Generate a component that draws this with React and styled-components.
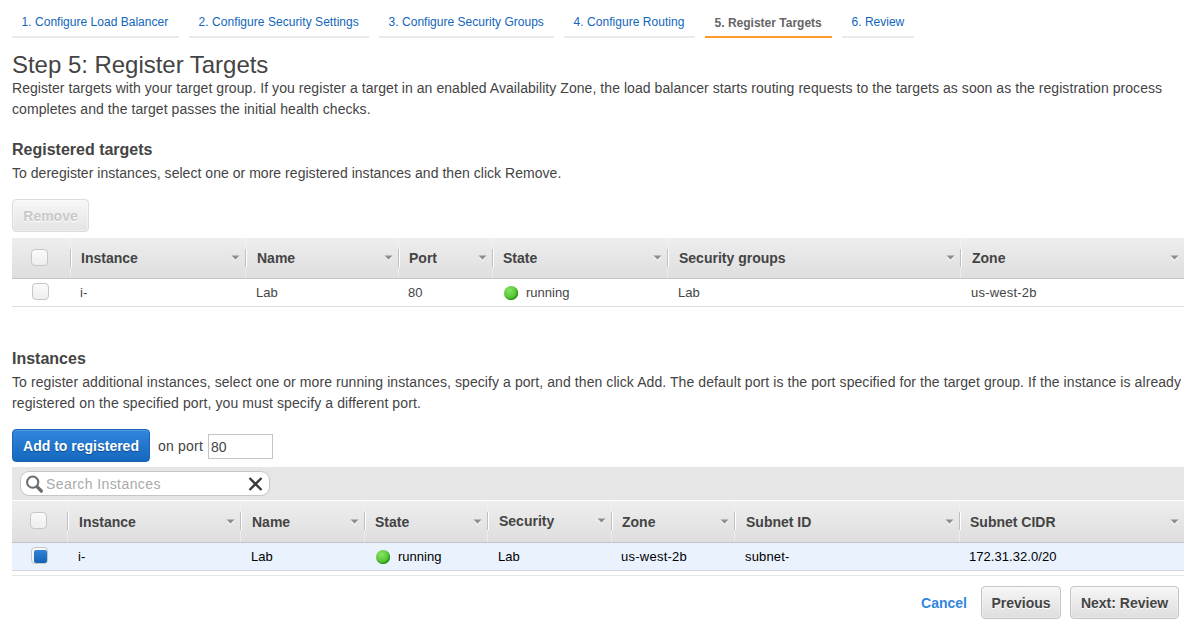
import React from "react";
import styled, { createGlobalStyle, css } from "styled-components";

const GlobalStyle = createGlobalStyle`
  * { box-sizing: border-box; }
  body {
    margin: 0;
    background: #fff;
    color: #444;
    font-family: "Liberation Sans", Arial, sans-serif;
    font-size: 14px;
  }
`;

const Page = styled.main`
  width: 1198px;
  height: 627px;
  overflow: hidden;
  padding: 6px 14px 0 12px;
`;

const Steps = styled.nav`
  display: flex;
  gap: 10px;
  height: 32px;
`;

const Step = styled.a`
  width: ${(p) => p.$width}px;
  height: 32px;
  padding: ${(p) => (p.$active ? 1 : 0)}px 0 0 9.6px;
  border-bottom: 2px solid ${(p) => (p.$active ? "#ff9a2e" : "#eaeaea")};
  color: ${(p) => (p.$active ? "#666" : "#1166bb")};
  font-size: 12px;
  font-weight: ${(p) => (p.$active ? 700 : 400)};
  line-height: 32px;
  white-space: nowrap;
  letter-spacing: ${(p) => p.$spacing || 0}px;
`;

const Title = styled.h1`
  margin: 12px 0 0;
  height: 28px;
  font-size: 24px;
  font-weight: 400;
  line-height: 30px;
  letter-spacing: -0.03px;
`;

const Copy = styled.p`
  margin: 0;
  line-height: 21px;
  white-space: nowrap;
`;

const Line = styled.span`
  display: block;
  letter-spacing: ${(p) => p.$spacing || 0}px;
`;

const Heading = styled.h2`
  margin: ${(p) => p.$top}px 0 3px;
  font-size: 16px;
  line-height: 21px;
`;

const Button = styled.button`
  display: block;
  width: ${(p) => p.$width}px;
  height: 33px;
  padding: 2px 0 0;
  border: 1px solid #c3c3c3;
  border-radius: 4px;
  background: linear-gradient(#f6f6f6, #dedede);
  box-shadow: inset 0 0 0 1px rgba(255, 255, 255, 0.35);
  color: #444;
  font: 700 14px/29px "Liberation Sans", Arial, sans-serif;
  text-shadow: 0 1px 0 #fff;
  white-space: nowrap;
  ${(p) =>
    p.$variant === "disabled" &&
    css`
      border-color: #dcdcdc;
      background: linear-gradient(#f7f7f7, #e4e4e4);
      color: #c9c9c9;
    `}
  ${(p) =>
    p.$variant === "primary" &&
    css`
      border-color: #1a64b0;
      background: linear-gradient(#3186dd, #1468bd);
      box-shadow: inset 0 1px 0 rgba(255, 255, 255, 0.15);
      color: #fff;
      text-shadow: 0 1px 1px #0b4a8c;
    `}
`;

const Table = styled.div`
  width: 1172px;
  margin-top: ${(p) => p.$top || 0}px;
`;

const Header = styled.div`
  display: grid;
  grid-template-columns: ${(p) => p.$columns};
  height: ${(p) => p.$height}px;
  border-bottom: 1px solid #c4c4c4;
  background: linear-gradient(#eeeeee, #dedede);
`;

const HeaderCell = styled.div`
  display: flex;
  align-items: center;
  justify-content: space-between;
  padding: 0 5px ${(p) => (p.$raised ? 2 : 0)}px ${(p) => p.$pad}px;
  background: linear-gradient(#c0c0c0, #c0c0c0) 0 11px / 1px 18px no-repeat,
    linear-gradient(#fff, #fff) 1px 11px / 1px 18px no-repeat,
    linear-gradient(#f2f2f2, #eaeaea) 0 0 / 1px 100% no-repeat;
  font-weight: 700;
  white-space: nowrap;
`;

const CheckCell = styled.div`
  padding: ${(p) => p.$pad};
`;

const Check = styled.span`
  display: flex;
  align-items: flex-end;
  justify-content: flex-end;
  width: 17px;
  height: 17px;
  border: 1px solid #c6c6c6;
  border-radius: 4px;
  background: linear-gradient(#fafafa, #eeeeee);
`;

const CheckFill = styled.span`
  width: 13px;
  height: 13px;
  border-radius: 2px;
  background: linear-gradient(#2f82d8, #1464b6);
`;

const Row = styled.div`
  display: grid;
  grid-template-columns: ${(p) => p.$columns};
  height: 28px;
  border-bottom: 1px solid ${(p) => (p.$selected ? "#d5d9df" : "#dcdcdc")};
  background: ${(p) => (p.$selected ? "#eaf2fe" : "#fff")};
  color: ${(p) => (p.$selected ? "#000" : "#444")};
  font-size: 13px;
  line-height: 27px;
`;

const Cell = styled.div`
  display: flex;
  align-items: center;
  padding-left: ${(p) => p.$pad}px;
  white-space: nowrap;
  letter-spacing: ${(p) => p.$spacing || 0}px;
`;

const Dot = styled.span`
  width: 14px;
  height: 14px;
  margin: 1px 8px 0 1px;
  border-radius: 50%;
  background: radial-gradient(circle at 38% 30%, #85e562 0, #5cc83a 50%, #35a41a 100%);
  box-shadow: inset -1px -1px 1px #259010;
`;

const PortRow = styled.div`
  display: flex;
  align-items: center;
  height: 33px;
  margin-top: 15px;
`;

const PortLabel = styled.label`
  width: 46px;
  margin: 1px 4px 0 8px;
  white-space: nowrap;
  letter-spacing: 0.2px;
`;

const PortInput = styled.input`
  width: 65px;
  height: 25px;
  margin-top: 1px;
  padding: 1px 0 0 2px;
  border: 1px solid #c4c4c4;
  background: #fff;
  color: #444;
  font: 14px "Liberation Sans", Arial, sans-serif;
`;

const SearchBar = styled.div`
  height: 34px;
  padding: 4px 8px;
  border-bottom: 1px solid #fff;
  background: #e6e6e6;
`;

const SearchBox = styled.div`
  display: flex;
  align-items: center;
  width: 250px;
  height: 25px;
  padding: 0 6px 0 5px;
  border: 1px solid #c6c6c6;
  border-radius: 9px;
  background: #fff;
`;

const Placeholder = styled.span`
  flex: 1;
  padding-left: 2px;
  color: #aaa;
  letter-spacing: 0.42px;
`;

const Footer = styled.footer`
  display: flex;
  align-items: center;
  justify-content: flex-end;
  margin-top: 4px;
  padding: 10px 5px 0 0;
  border-top: 1px solid #e6e6e6;
`;

const Cancel = styled.a`
  margin-right: 14px;
  color: #3186e0;
  font-weight: 700;
`;

const Gap = styled.span`
  width: 9px;
`;

const Caret = () => (
  <svg width="9" height="6" viewBox="0 0 9 6">
    <path d="M0.5 1.5h8L4.5 6z" fill="#fff" />
    <path d="M0.5 0.5h8L4.5 4.8z" fill="#8d8d8d" />
  </svg>
);

const SearchIcon = () => (
  <svg width="18" height="18" viewBox="0 0 18 18" fill="none" stroke="#6b6b6b">
    <circle cx="6.7" cy="7.2" r="5.6" strokeWidth="2" />
    <path d="M11 11.7L15.3 16" strokeWidth="3.2" strokeLinecap="round" />
  </svg>
);

const ClearIcon = () => (
  <svg width="15" height="15" viewBox="0 0 15 15" stroke="#383838" strokeWidth="2.3">
    <path d="M1.5 2l12 12M13.5 2l-12 12" />
  </svg>
);

const steps = [
  ["1. Configure Load Balancer", 167, 0.02],
  ["2. Configure Security Settings", 180, 0.05],
  ["3. Configure Security Groups", 175, 0.02],
  ["4. Configure Routing", 131, 0.04],
  ["5. Register Targets", 127, 0],
  ["6. Review", 72, 0],
];

const registeredLayout = "58px 175px 153px 94px 175px 293px 1fr";
const registeredColumns = [
  { title: "Instance", value: "i-", pad: 11 },
  { title: "Name", value: "Lab", pad: 12 },
  { title: "Port", value: "80", pad: 11 },
  { title: "State", value: "running", pad: 11, status: true },
  { title: "Security groups", value: "Lab", pad: 12 },
  { title: "Zone", value: "us-west-2b", pad: 12, spacing: 0.2 },
];

const instanceLayout = "55px 173px 124px 123px 124px 123px 225px 1fr";
const instanceColumns = [
  { title: "Instance", value: "i-", pad: 12 },
  { title: "Name", value: "Lab", pad: 12 },
  { title: "State", value: "running", pad: 11, status: true },
  { title: "Security", value: "Lab", pad: 12, raised: true },
  { title: "Zone", value: "us-west-2b", pad: 11, spacing: 0.25 },
  { title: "Subnet ID", value: "subnet-", pad: 12, spacing: 0.15 },
  { title: "Subnet CIDR", value: "172.31.32.0/20", pad: 11, spacing: 0.05 },
];

function DataTable({ layout, height, columns, selected, headPad, rowPad }) {
  return (
    <>
      <Header $columns={layout} $height={height}>
        <CheckCell $pad={headPad}>
          <Check />
        </CheckCell>
        {columns.map((c) => (
          <HeaderCell key={c.title} $pad={c.pad} $raised={c.raised}>
            {c.title}
            <Caret />
          </HeaderCell>
        ))}
      </Header>
      <Row $columns={layout} $selected={selected}>
        <CheckCell $pad={rowPad}>
          <Check>{selected && <CheckFill />}</Check>
        </CheckCell>
        {columns.map((c) => (
          <Cell key={c.title} $pad={c.status ? c.pad : c.pad - 1} $spacing={c.spacing}>
            {c.status && <Dot />}
            {c.value}
          </Cell>
        ))}
      </Row>
    </>
  );
}

export default function App() {
  return (
    <Page>
      <GlobalStyle />
      <Steps>
        {steps.map(([label, width, spacing], i) => (
          <Step key={label} $width={width} $spacing={spacing} $active={i === 4}>
            {label}
          </Step>
        ))}
      </Steps>
      <Title>Step 5: Register Targets</Title>
      <Copy>
        <Line $spacing={0.058}>
          Register targets with your target group. If you register a target in an enabled Availability Zone, the load
          balancer starts routing requests to the targets as soon as the registration process
        </Line>
        <Line $spacing={0.065}>completes and the target passes the initial health checks.</Line>
      </Copy>
      <Heading $top={19}>Registered targets</Heading>
      <Copy>
        <Line $spacing={0.035}>
          To deregister instances, select one or more registered instances and then click Remove.
        </Line>
      </Copy>
      <PortRow>
        <Button $width={77} $variant="disabled">
          Remove
        </Button>
      </PortRow>
      <Table $top={6}>
        <DataTable
          layout={registeredLayout}
          height={41}
          columns={registeredColumns}
          headPad="11px 0 0 19px"
          rowPad="4px 0 0 20px"
        />
      </Table>
      <Heading $top={41}>Instances</Heading>
      <Copy>
        <Line $spacing={0.078}>
          To register additional instances, select one or more running instances, specify a port, and then click Add.
          The default port is the port specified for the target group. If the instance is already
        </Line>
        <Line $spacing={0.1}>registered on the specified port, you must specify a different port.</Line>
      </Copy>
      <PortRow>
        <Button $width={138} $variant="primary">
          Add to registered
        </Button>
        <PortLabel>on port</PortLabel>
        <PortInput defaultValue="80" />
      </PortRow>
      <Table $top={5}>
        <SearchBar>
          <SearchBox>
            <SearchIcon />
            <Placeholder>Search Instances</Placeholder>
            <ClearIcon />
          </SearchBox>
        </SearchBar>
        <DataTable
          layout={instanceLayout}
          height={42}
          columns={instanceColumns}
          selected
          headPad="11px 0 0 18px"
          rowPad="4px 0 0 19px"
        />
      </Table>
      <Footer>
        <Cancel>Cancel</Cancel>
        <Button $width={80}>Previous</Button>
        <Gap />
        <Button $width={109}>Next: Review</Button>
      </Footer>
    </Page>
  );
}
